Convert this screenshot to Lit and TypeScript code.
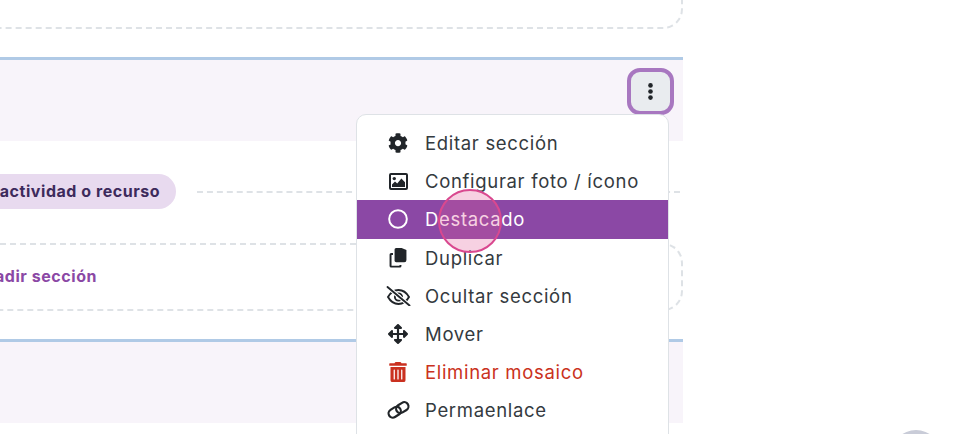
import { LitElement, html, css, svg } from "lit";
import { customElement } from "lit/decorators.js";

const icons: Record<string, [string, unknown]> = {
  gear: ["0 0 512 512", svg`<path d="M487.4 315.7l-42.6-24.6c4.3-23.2 4.3-47 0-70.2l42.6-24.6c4.9-2.8 7.1-8.6 5.5-14-11.1-35.6-30-67.8-54.7-94.6-3.8-4.1-10-5.1-14.8-2.3L380.8 110c-17.9-15.4-38.5-27.3-60.8-35.1V25.8c0-5.6-3.9-10.5-9.4-11.7-36.7-8.2-74.3-7.8-109.2 0-5.5 1.2-9.4 6.1-9.4 11.7V75c-22.2 7.9-42.8 19.8-60.8 35.1L88.7 85.5c-4.9-2.8-11-1.9-14.8 2.3-24.7 26.7-43.6 58.9-54.7 94.6-1.7 5.4.6 11.2 5.5 14L67.3 221c-4.3 23.2-4.3 47 0 70.2l-42.6 24.6c-4.9 2.8-7.1 8.6-5.5 14 11.1 35.6 30 67.8 54.7 94.6 3.8 4.1 10 5.1 14.8 2.3l42.6-24.6c17.9 15.4 38.5 27.3 60.8 35.1v49.2c0 5.6 3.9 10.5 9.4 11.7 36.7 8.2 74.3 7.8 109.2 0 5.5-1.2 9.4-6.1 9.4-11.7v-49.2c22.2-7.9 42.8-19.8 60.8-35.1l42.6 24.6c4.9 2.8 11 1.9 14.8-2.3 24.7-26.7 43.6-58.9 54.7-94.6 1.5-5.5-.7-11.3-5.6-14.1zM256 336c-44.1 0-80-35.9-80-80s35.9-80 80-80 80 35.9 80 80-35.9 80-80 80z"/>`],
  image: ["0 0 19 17", svg`<path fill-rule="evenodd" d="M2 0h15a2 2 0 0 1 2 2v13a2 2 0 0 1-2 2H2a2 2 0 0 1-2-2V2a2 2 0 0 1 2-2zm0 2v13h15V2z"/><circle cx="5.3" cy="5.6" r="1.7"/><path d="M3 14v-2.6l3-3 2.2 2.2L12.4 5.6 16 9.2V14z"/>`],
  circle: ["0 0 512 512", svg`<circle cx="256" cy="256" r="226" fill="none" stroke="currentColor" stroke-width="50"/>`],
  copy: ["0 0 448 512", svg`<path d="M176 0h140l124 50v256a56 56 0 0 1-56 56H176a40 40 0 0 1-40-40V40a40 40 0 0 1 40-40z"/><path d="M96 128H48a40 40 0 0 0-40 40v290a44 44 0 0 0 44 44h220a40 40 0 0 0 40-40v-30h-50v20H58V178h38z"/>`],
  eyeoff: ["0 0 25 20", svg`<g fill="none" stroke="currentColor" stroke-width="1.9">
      <path d="M2 11c2.5-4.4 6.2-7 10.5-7S20.500 6.600 23 11c-2.500 4.400-6.200 7-10.500 7S4.500 15.400 2 11z"/>
      <circle cx="12.500" cy="11" r="3.600"/>
      <path d="M1.500 1l22 18.500" stroke="#fff" stroke-width="4"/>
      <path d="M1.500 1l22 18.500" stroke-linecap="round"/>
    </g>`],
  move: ["0 0 512 512", svg`<path d="M352.201 425.775l-79.196 79.196c-9.373 9.373-24.568 9.373-33.941 0l-79.196-79.196c-15.119-15.119-4.411-40.971 16.971-40.97h51.162L228 284H127.196v51.162c0 21.382-25.851 32.09-40.971 16.971L7.029 272.937c-9.373-9.373-9.373-24.569 0-33.941L86.225 159.8c15.119-15.119 40.971-4.411 40.971 16.971V228H228V127.196h-51.23c-21.382 0-32.09-25.851-16.971-40.971l79.196-79.196c9.373-9.373 24.568-9.373 33.941 0l79.196 79.196c15.119 15.119 4.411 40.971-16.971 40.971h-51.162V228h100.804v-51.162c0-21.382 25.851-32.09 40.97-16.971l79.196 79.196c9.373 9.373 9.373 24.569 0 33.941L425.773 352.2c-15.119 15.119-40.971 4.411-40.97-16.971V284H284v100.804h51.23c21.382 0 32.09 25.851 16.971 40.971z"/>`],
  trash: ["0 0 448 512", svg`<path d="M32 464a48 48 0 0 0 48 48h288a48 48 0 0 0 48-48V128H32zm272-256a16 16 0 0 1 32 0v224a16 16 0 0 1-32 0zm-96 0a16 16 0 0 1 32 0v224a16 16 0 0 1-32 0zm-96 0a16 16 0 0 1 32 0v224a16 16 0 0 1-32 0zM432 32H312l-9.4-18.7A24 24 0 0 0 281.1 0H166.8a23.72 23.72 0 0 0-21.4 13.3L136 32H16A16 16 0 0 0 0 48v32a16 16 0 0 0 16 16h416a16 16 0 0 0 16-16V48a16 16 0 0 0-16-16z"/>`],
  link: ["0 0 25 20", svg`<g fill="none" stroke="currentColor" stroke-width="2.200">
      <rect x="2.200" y="8" width="13" height="8.400" rx="4.200" transform="rotate(-32 8.700 12.200)"/>
      <rect x="9.800" y="3.400" width="13" height="8.400" rx="4.200" transform="rotate(-32 16.300 7.600)"/>
    </g>`],
};

const items = [
  { icon: "gear", label: "Editar sección", cls: "" },
  { icon: "image", label: "Configurar foto / ícono", cls: "img" },
  { icon: "circle", label: "Destacado", cls: "active" },
  { icon: "copy", label: "Duplicar", cls: "" },
  { icon: "eyeoff", label: "Ocultar sección", cls: "wide" },
  { icon: "move", label: "Mover", cls: "" },
  { icon: "trash", label: "Eliminar mosaico", cls: "danger" },
  { icon: "link", label: "Permaenlace", cls: "wide" },
];

@customElement("app-root")
export class AppRoot extends LitElement {
  static styles = css`
    :host {
      display: block;
      position: relative;
      width: 960px;
      height: 434px;
      overflow: hidden;
      background: #fff;
      font-family: Inter, "Open Sans", sans-serif;
      color: #343a40;
    }
    .column {
      width: 723px;
      margin: -31px 0 0 -40px;
      display: flex;
      flex-direction: column;
    }
    .dashed {
      box-sizing: border-box;
      border: 2px dashed #dee2e6;
      border-radius: 20px;
      background: #fff;
    }
    .top-card { height: 60px; flex: none; }
    .section { position: relative; margin-top: 28px; flex: none; }
    .header {
      box-sizing: border-box;
      height: 84px;
      border-top: 3px solid #b0cae6;
      background: #f8f4fa;
      display: flex;
      justify-content: flex-end;
      align-items: flex-start;
      padding: 8px 9px 0 0;
    }
    .kebab {
      box-sizing: border-box;
      width: 47px;
      height: 47px;
      border: 4px solid #a877c0;
      border-radius: 13px;
      background: #e9ecef;
      padding: 0;
      display: flex;
      align-items: center;
      justify-content: center;
    }
    .kebab svg { width: 5px; height: 17px; display: block; fill: #212529; }
    .body { height: 198px; box-sizing: border-box; padding-top: 33px; }
    .pill-row {
      display: flex;
      align-items: center;
      gap: 21px;
      height: 35px;
      margin-left: -36px;
    }
    .pill {
      flex: none;
      height: 35px;
      box-sizing: border-box;
      padding: 0 16px;
      border-radius: 18px;
      background: #e8daef;
      color: #3d2a5c;
      font-size: 16px;
      letter-spacing: 0.55px;
      font-weight: 700;
      line-height: 35px;
      white-space: nowrap;
    }
    .rule { flex: 1; border-top: 2px dashed #dee2e6; margin-right: 3px; }
    .add-box {
      height: 68px;
      margin-top: 34px;
      display: flex;
      align-items: center;
      padding: 0 0 2px 10px;
      color: #8b48a5;
      font-size: 16px;
      letter-spacing: 0.55px;
      font-weight: 700;
      white-space: nowrap;
    }
    .second { margin-top: 0; }
    .menu {
      position: absolute;
      top: 57px;
      right: 14px;
      width: 313px;
      box-sizing: border-box;
      height: 340px;
      padding: 9px 0;
      background: #fff;
      border: 1px solid #dee2e6;
      border-radius: 10px;
      z-index: 2;
    }
    .item {
      display: flex;
      align-items: center;
      height: 38.2px;
      font-size: 18.5px;
      letter-spacing: 0.68px;
      white-space: nowrap;
    }
    .item .ic {
      flex: none;
      width: 20px;
      height: 20px;
      margin: 0 17px 0 31px;
      display: flex;
      align-items: center;
      justify-content: center;
    }
    .ic svg { width: 20px; height: 20px; fill: currentColor; color: #212529; display: block; flex: none; }
    .item.wide .ic svg { width: 25px; }
    .item.img .ic svg { width: 19px; height: 17px; }
    .item.active { background: #8b48a5; color: #fff; }
    .item.active .ic svg { color: #fff; }
    .item.danger { color: #ca3120; }
    .item.danger .ic svg { color: #ca3120; }
    .touch {
      position: absolute;
      left: 438px;
      top: 189px;
      width: 64px;
      height: 64px;
      box-sizing: border-box;
      border: 2px solid #d9488f;
      border-radius: 50%;
      background: rgba(225, 90, 150, 0.28);
      z-index: 3;
    }
    .fab {
      position: absolute;
      left: 891px;
      top: 430px;
      width: 50px;
      height: 50px;
      border-radius: 50%;
      background: #c9ccd8;
    }
  `;

  render() {
    return html`
      <div class="column">
        <div class="dashed top-card"></div>
        <div class="section">
          <div class="header">
            <button class="kebab" aria-label="Opciones">
              <svg viewBox="0 0 5 17"><circle cx="2.5" cy="2.400" r="2.300"/><circle cx="2.5" cy="8.500" r="2.300"/><circle cx="2.5" cy="14.600" r="2.300"/></svg>
            </button>
          </div>
          <div class="body">
            <div class="pill-row">
              <div class="pill">Añadir actividad o recurso</div>
              <div class="rule"></div>
            </div>
            <div class="dashed add-box"><span>Añadir sección</span></div>
          </div>
          <div class="menu">
            ${items.map(
              (it) => html`<div class="item ${it.cls}">
                <span class="ic"><svg viewBox=${icons[it.icon][0]}>${icons[it.icon][1]}</svg></span>
                <span>${it.label}</span>
              </div>`
            )}
          </div>
        </div>
        <div class="section second">
          <div class="header"></div>
        </div>
      </div>
      <div class="touch"></div>
      <div class="fab"></div>
    `;
  }
}
